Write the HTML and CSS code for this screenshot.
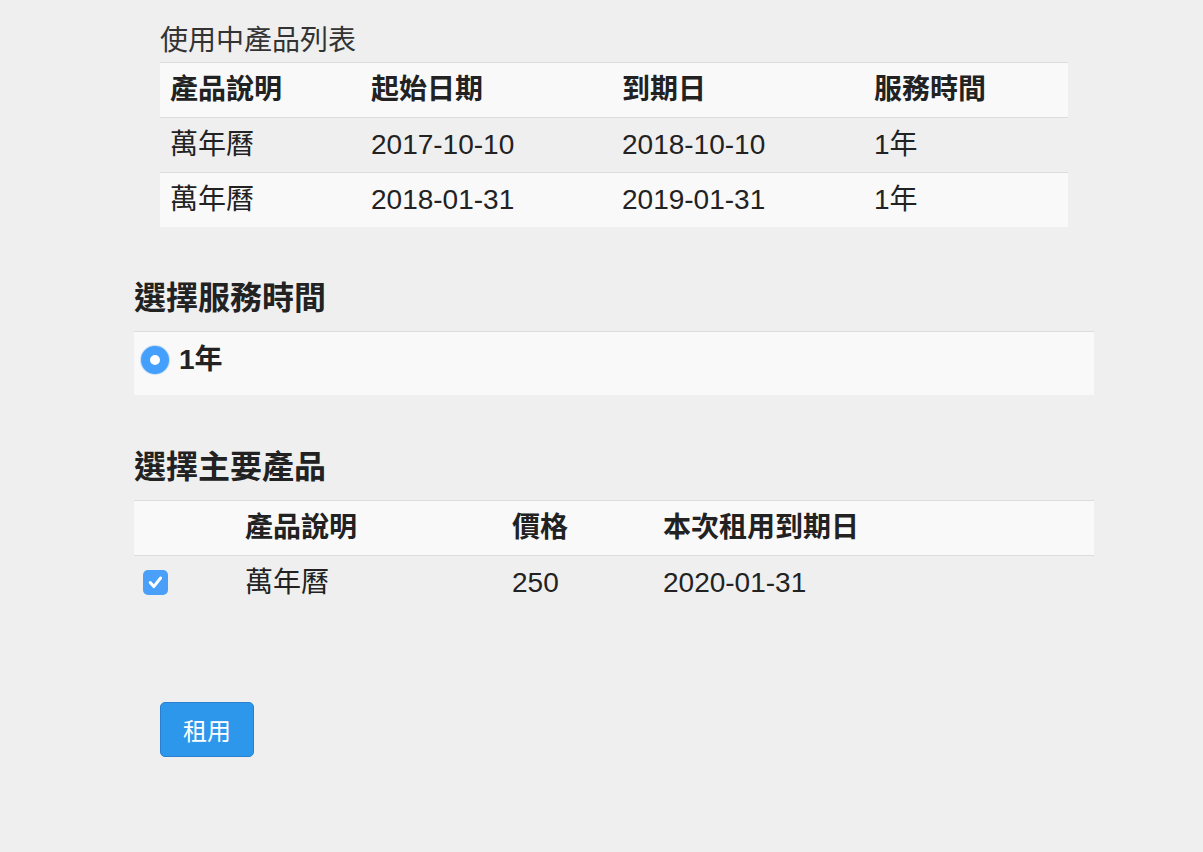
FILE: index.html
```html
<!DOCTYPE html>
<html lang="zh-Hant">
<head>
<meta charset="utf-8">
<title>租用</title>
<link rel="stylesheet" href="styles.css">
</head>
<body>
<div class="page">
  <section class="current">
    <div class="caption">使用中產品列表</div>
    <table class="grid grid-current">
      <colgroup><col class="c1"><col class="c2"><col class="c3"><col></colgroup>
      <thead>
        <tr><th>產品說明</th><th>起始日期</th><th>到期日</th><th>服務時間</th></tr>
      </thead>
      <tbody>
        <tr class="plain"><td>萬年曆</td><td>2017-10-10</td><td>2018-10-10</td><td>1年</td></tr>
        <tr class="light"><td>萬年曆</td><td>2018-01-31</td><td>2019-01-31</td><td>1年</td></tr>
      </tbody>
    </table>
  </section>

  <h2 class="heading">選擇服務時間</h2>
  <div class="option-box">
    <label class="option"><span class="radio"></span><span class="option-label">1年</span></label>
  </div>

  <h2 class="heading heading-products">選擇主要產品</h2>
  <table class="grid grid-products">
    <colgroup><col class="p1"><col class="p2"><col class="p3"><col></colgroup>
    <thead>
      <tr><th></th><th>產品說明</th><th>價格</th><th>本次租用到期日</th></tr>
    </thead>
    <tbody>
      <tr class="plain">
        <td class="check-cell"><span class="checkbox"><svg viewBox="0 0 25 25" width="25" height="25"><path d="M7.2 12.6 L10.8 16.6 L17.6 8" fill="none" stroke="#fff" stroke-width="3" stroke-linecap="round" stroke-linejoin="round"/></svg></span></td>
        <td>萬年曆</td><td>250</td><td>2020-01-31</td>
      </tr>
    </tbody>
  </table>

  <div class="actions">
    <button class="btn" type="button">租用</button>
  </div>
</div>
</body>
</html>
```

FILE: styles.css
```css
html, body {
  margin: 0;
  padding: 0;
  background: #efefef;
}
body {
  font-family: "Liberation Sans", "Noto Sans CJK TC", sans-serif;
  color: #222;
  font-size: 28px;
}
.page {
  width: 960px;
  margin-left: 134px;
  padding-top: 20px;
  padding-bottom: 95px;
}
.current {
  margin-left: 26px;
  width: 908px;
}
.caption {
  font-size: 28px;
  line-height: 42px;
  color: #333;
}
.grid {
  border-collapse: collapse;
  width: 100%;
  table-layout: fixed;
}
.grid th, .grid td {
  text-align: left;
  padding: 0 10px;
  height: 54px;
  line-height: 54px;
  border-top: 1px solid #dcdcdc;
  white-space: nowrap;
}
.grid th {
  font-weight: bold;
  background: #f9f9f9;
  color: #222;
}
.grid td {
  font-weight: normal;
  color: #222;
}
.grid tr.plain td { background: transparent; }
.grid tr.light td { background: #f9f9f9; }
.grid-current col.c1 { width: 201px; }
.grid-current col.c2 { width: 251px; }
.grid-current col.c3 { width: 252px; }
.grid-products col.p1 { width: 101px; }
.grid-products col.p2 { width: 267px; }
.grid-products col.p3 { width: 151px; }

.heading {
  margin: 49px 0 11px;
  font-size: 32px;
  line-height: 44px;
  font-weight: bold;
  color: #222;
}
.heading-products {
  margin-top: 50px;
}
.option-box {
  background: #f9f9f9;
  border-top: 1px solid #dcdcdc;
  padding: 12px 7px 19px;
}
.option {
  display: flex;
  align-items: center;
  gap: 10px;
  height: 32px;
}
.radio {
  box-sizing: border-box;
  width: 28px;
  height: 28px;
  border-radius: 50%;
  border: 9px solid #45a0fd;
  background: #fff;
  box-shadow: 0 0 0 1px rgba(60, 140, 230, 0.25);
}
.option-label {
  font-weight: bold;
  font-size: 28px;
  line-height: 32px;
  color: #222;
}
.check-cell {
  padding-left: 9px !important;
}
.checkbox {
  display: inline-flex;
  width: 25px;
  height: 25px;
  border-radius: 5px;
  background: #4a9ff8;
  vertical-align: middle;
  position: relative;
  top: -2px;
}
.actions {
  margin-top: 92px;
  padding-left: 26px;
}
.btn {
  box-sizing: border-box;
  width: 94px;
  height: 55px;
  background: #2d97ec;
  border: 1px solid #2a80cf;
  border-radius: 5px;
  color: #fff;
  font-family: "Liberation Sans", "Noto Sans CJK TC", sans-serif;
  font-size: 24px;
  font-weight: normal;
  padding: 0;
  cursor: pointer;
}
```
